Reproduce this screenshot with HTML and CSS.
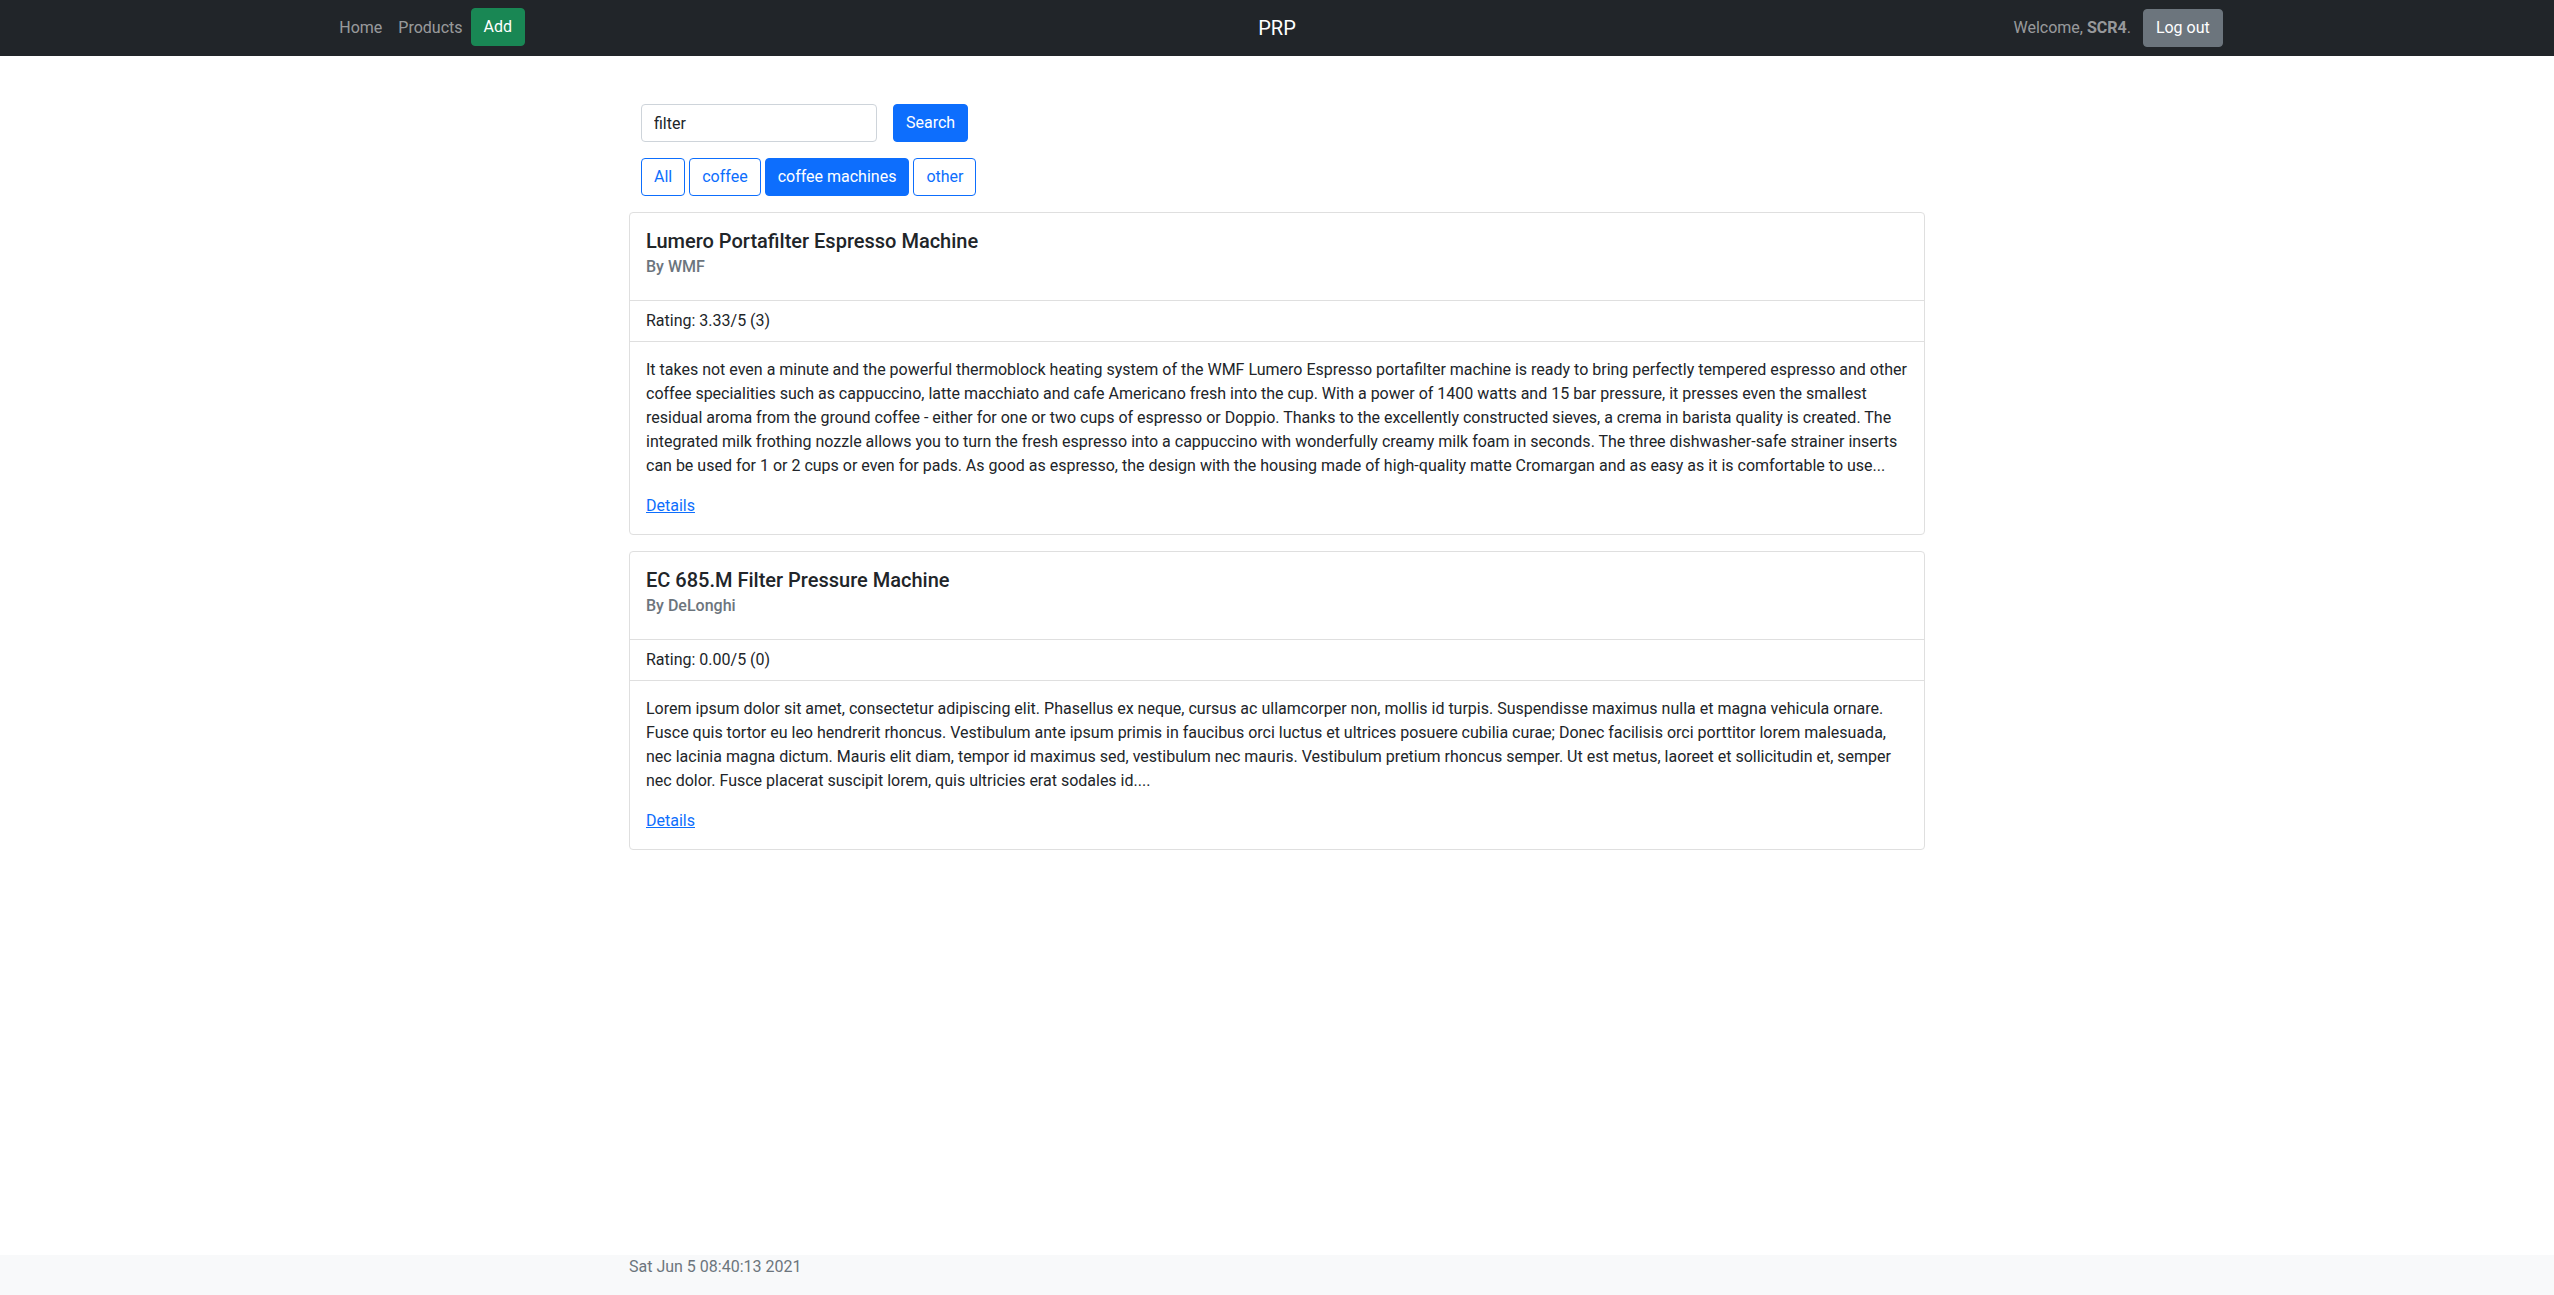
FILE: index.html
```html
<!DOCTYPE html>
<html lang="en">
<head>
  <meta charset="utf-8">
  <meta name="viewport" content="width=device-width, initial-scale=1">
  <title>PRP</title>
  <link rel="stylesheet" href="styles.css">
</head>
<body>
  <header class="navbar">
    <nav class="navbar-inner">
      <div class="nav-group">
        <a class="nav-link" href="#">Home</a>
        <a class="nav-link" href="#">Products</a>
        <button type="button" class="btn btn-success">Add</button>
      </div>
      <a class="brand" href="#">PRP</a>
      <div class="nav-group nav-group-end">
        <span class="welcome">Welcome, <strong>SCR4</strong>.</span>
        <button type="button" class="btn btn-secondary">Log out</button>
      </div>
    </nav>
  </header>

  <main class="container">
    <form class="search">
      <input class="field" type="text" value="filter" aria-label="Search products">
      <button type="button" class="btn btn-primary">Search</button>
    </form>
    <div class="categories">
      <button type="button" class="btn btn-outline">All</button>
      <button type="button" class="btn btn-outline">coffee</button>
      <button type="button" class="btn btn-primary" aria-pressed="true">coffee machines</button>
      <button type="button" class="btn btn-outline">other</button>
    </div>

    <article class="card">
      <div class="card-body">
        <h5 class="card-title">Lumero Portafilter Espresso Machine</h5>
        <h6 class="card-subtitle">By WMF</h6>
      </div>
      <div class="rating">Rating: 3.33/5 (3)</div>
      <div class="card-body">
        <p class="card-text">It takes not even a minute and the powerful thermoblock heating system of the WMF Lumero Espresso portafilter machine is ready to bring perfectly tempered espresso and other coffee specialities such as cappuccino, latte macchiato and cafe Americano fresh into the cup. With a power of 1400 watts and 15 bar pressure, it presses even the smallest residual aroma from the ground coffee - either for one or two cups of espresso or Doppio. Thanks to the excellently constructed sieves, a crema in barista quality is created. The integrated milk frothing nozzle allows you to turn the fresh espresso into a cappuccino with wonderfully creamy milk foam in seconds. The three dishwasher-safe strainer inserts can be used for 1 or 2 cups or even for pads. As good as espresso, the design with the housing made of high-quality matte Cromargan and as easy as it is comfortable to use...</p>
        <a class="details" href="#">Details</a>
      </div>
    </article>

    <article class="card">
      <div class="card-body">
        <h5 class="card-title">EC 685.M Filter Pressure Machine</h5>
        <h6 class="card-subtitle">By DeLonghi</h6>
      </div>
      <div class="rating">Rating: 0.00/5 (0)</div>
      <div class="card-body">
        <p class="card-text">Lorem ipsum dolor sit amet, consectetur adipiscing elit. Phasellus ex neque, cursus ac ullamcorper non, mollis id turpis. Suspendisse maximus nulla et magna vehicula ornare. Fusce quis tortor eu leo hendrerit rhoncus. Vestibulum ante ipsum primis in faucibus orci luctus et ultrices posuere cubilia curae; Donec facilisis orci porttitor lorem malesuada, nec lacinia magna dictum. Mauris elit diam, tempor id maximus sed, vestibulum nec mauris. Vestibulum pretium rhoncus semper. Ut est metus, laoreet et sollicitudin et, semper nec dolor. Fusce placerat suscipit lorem, quis ultricies erat sodales id....</p>
        <a class="details" href="#">Details</a>
      </div>
    </article>
  </main>

  <footer class="footer">
    <div class="container">Sat Jun 5 08:40:13 2021</div>
  </footer>
</body>
</html>
```
FILE: styles.css
```css
*,
*::before,
*::after {
  box-sizing: border-box;
}

body {
  display: flex;
  flex-direction: column;
  min-height: 100vh;
  margin: 0;
  font-family: Roboto, "Liberation Sans", sans-serif;
  font-size: 16px;
  line-height: 24px;
  color: #212529;
  background: #fff;
}

.container {
  width: 100%;
  max-width: 1320px;
  margin: 0 auto;
  padding: 0 12px;
}

/* Navigation bar */
.navbar {
  padding: 8px 0;
  background: #212529;
}

.navbar-inner {
  display: grid;
  grid-template-columns: 1fr auto 1fr;
  align-items: center;
  width: 75%;
  margin: 0 auto;
  padding: 0 12px;
}

.nav-group {
  display: flex;
  align-items: flex-start;
}

.nav-group-end {
  align-items: center;
  justify-content: flex-end;
  gap: 12px;
}

.nav-link {
  padding: 8px;
  color: rgba(255, 255, 255, 0.55);
  text-decoration: none;
}

.welcome {
  color: rgba(255, 255, 255, 0.55);
}

.welcome strong {
  font-weight: 700;
}

.brand {
  font-size: 20px;
  line-height: 30px;
  color: #fff;
  text-decoration: none;
}

/* Buttons and fields */
.btn {
  padding: 6px 12px;
  font: inherit;
  color: #fff;
  border: 1px solid transparent;
  border-radius: 4px;
  cursor: pointer;
}

.btn-success {
  background: #198754;
  border-color: #198754;
}

.btn-secondary {
  background: #6c757d;
  border-color: #6c757d;
}

.btn-primary {
  background: #0d6efd;
  border-color: #0d6efd;
}

.btn-outline {
  color: #0d6efd;
  background: transparent;
  border-color: #0d6efd;
}

.field {
  width: 236px;
  height: 38px;
  padding: 6px 12px;
  font: inherit;
  color: #212529;
  background: #fff;
  border: 1px solid #ced4da;
  border-radius: 4px;
}

.search {
  display: flex;
  gap: 16px;
  margin-top: 48px;
  padding: 0 12px;
}

.categories {
  display: flex;
  flex-wrap: wrap;
  gap: 4px;
  margin: 16px 0;
  padding: 0 12px;
}

/* Product cards */
.card {
  margin-bottom: 16px;
  border: 1px solid #dfdfdf;
  border-radius: 4px;
}

.card-body {
  padding: 16px;
}

.card-title {
  margin: 0 0 4px;
  font-size: 20px;
  font-weight: 500;
  line-height: 24px;
}

.card-subtitle {
  margin: 0 0 8px;
  font-size: 16px;
  font-weight: 500;
  line-height: 19px;
  color: #6c757d;
}

.rating {
  padding: 8px 16px;
  border: solid #dfdfdf;
  border-width: 1px 0;
}

.card-text {
  margin: 0 0 16px;
}

.details {
  color: #0d6efd;
}

.footer {
  margin-top: auto;
  padding-bottom: 16px;
  color: #6c757d;
  background: #f8f9fa;
}
```
